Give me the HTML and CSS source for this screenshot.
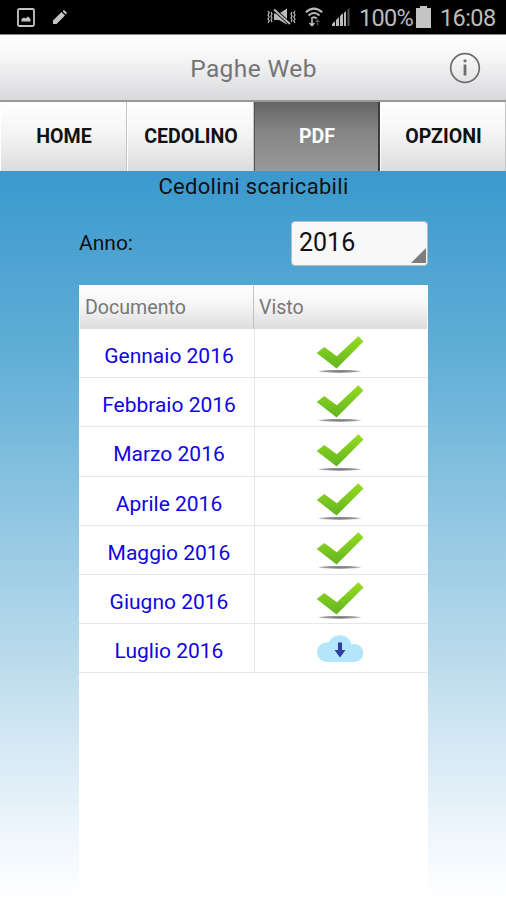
FILE: index.html
```html
<!DOCTYPE html>
<html lang="it">
<head>
    <meta charset="UTF-8">
    <meta name="viewport" content="width=device-width, initial-scale=1.0">
    <title>Paghe Web</title>
    <link rel="stylesheet" href="styles.css">
</head>
<body>

<!-- Shared icons -->
<svg class="icon-defs" width="0" height="0">
    <defs>
        <linearGradient id="check-fill" x1="0" y1="0" x2="0" y2="1">
            <stop offset="0" stop-color="#96dc1e"/>
            <stop offset="1" stop-color="#62b422"/>
        </linearGradient>
        <radialGradient id="check-shadow">
            <stop offset="0" stop-color="#777"/>
            <stop offset="0.7" stop-color="#999"/>
            <stop offset="1" stop-color="#ddd"/>
        </radialGradient>
        <symbol id="icon-check" viewBox="0 0 50 42">
            <ellipse cx="24.7" cy="37.3" rx="21.8" ry="1.6" fill="url(#check-shadow)"/>
            <path d="M1.700 19L9.300 13L21.800 22.300L43.300 2.200L48.500 7.500L21.600 34.500Z" fill="url(#check-fill)"/>
        </symbol>
    </defs>
</svg>

<div class="status-bar">
    <div class="status-left">
        <svg class="icon-picture" width="18" height="19" viewBox="0 0 18 19">
            <rect x="1" y="1" width="16" height="17" rx="1.5" fill="none" stroke="#c4c4c4" stroke-width="1.8"/>
            <path d="M4.5 13.5V11L7 9.5L8.5 10.5L11 8.5L13.5 11V13.5Z" fill="#c4c4c4"/>
        </svg>
        <svg class="icon-pencil" width="14" height="14" viewBox="0 0 14 14">
            <path d="M0 14V10.5L8.5 2L12 5.5L3.5 14ZM9.5 1.2L11 0L14 2.8L12.800 4.500Z" fill="#c4c4c4"/>
        </svg>
    </div>
    <div class="status-right">
        <svg width="29" height="18" viewBox="0 0 29 18" fill="none" stroke="#bbb" stroke-width="1.2">
            <path d="M1 3L2.2 5L1 7L2.2 9L1 11L2.2 13L1 15M4 4L5 6L4 8L5 10L4 12L5 14M25 4L24 6L25 8L24 10L25 12L24 14M28 3L26.8 5L28 7L26.8 9L28 11L26.8 13L28 15"/>
            <path d="M7 5.5H12L20 0.5V16.5L12 12H7Z" fill="#bbb" stroke="none"/>
            <path d="M7 1.5L23 16" stroke="#000" stroke-width="3.6"/>
            <path d="M7 1.5L23 16" stroke-width="1.8"/>
        </svg>
        <svg width="18" height="20" viewBox="0 0 18 20" fill="none" stroke="#bbb" stroke-width="2">
            <path d="M0.8 5.2Q9 -2 17.2 5.2M3.5 8.5Q9 3.5 14.5 8.5M6.2 11.5Q9 9 11.8 11.5"/>
            <path d="M7 12V18M4.5 16L7 18.5L9.5 16" stroke-width="1.6"/>
            <path d="M12.5 18.5V13M10.5 15L12.5 13L14.5 15" stroke="#555" stroke-width="1.3"/>
        </svg>
        <svg width="18" height="18" viewBox="0 0 18 18" fill="#bbb">
            <path d="M0 18V16L3 13V18ZM4 18V12L7 9V18ZM8 18V8L11 5V18ZM12 18V5L14 3V18Z"/>
            <path d="M15.5 18V1.5L17.5 0V18Z" fill="#555"/>
        </svg>
        <span class="battery-level">100%</span>
        <svg width="15" height="22" viewBox="0 0 15 22">
            <path d="M4 0H11V2H15V22H0V2H4Z" fill="#c4c4c4"/>
        </svg>
        <span class="clock">16:08</span>
    </div>
</div>

<header class="title-bar">
    <h1>Paghe Web</h1>
    <svg width="32" height="32" viewBox="0 0 32 32">
        <circle cx="16" cy="16" r="14.3" fill="none" stroke="#6e6e6e" stroke-width="1.7"/>
        <path d="M16 12.5V23.5M16 7.5V10.3" stroke="#6e6e6e" stroke-width="2.8"/>
    </svg>
</header>

<nav class="tabs">
    <a class="tab">HOME</a>
    <a class="tab">CEDOLINO</a>
    <a class="tab active">PDF</a>
    <a class="tab">OPZIONI</a>
</nav>

<main class="content">
    <h2>Cedolini scaricabili</h2>

    <div class="year-row">
        <span class="year-label">Anno:</span>
        <div class="year-select">
            <span>2016</span>
            <svg width="15" height="15" viewBox="0 0 15 15"><path d="M15 0V15H0Z" fill="#7d7d7d"/></svg>
        </div>
    </div>

    <!-- Documents -->
    <div class="documents">
        <div class="row head">
            <div class="cell">Documento</div>
            <div class="cell">Visto</div>
        </div>
        <div class="row">
            <div class="cell"><a>Gennaio 2016</a></div>
            <div class="cell"><svg class="check"><use href="#icon-check"/></svg></div>
        </div>
        <div class="row">
            <div class="cell"><a>Febbraio 2016</a></div>
            <div class="cell"><svg class="check"><use href="#icon-check"/></svg></div>
        </div>
        <div class="row">
            <div class="cell"><a>Marzo 2016</a></div>
            <div class="cell"><svg class="check"><use href="#icon-check"/></svg></div>
        </div>
        <div class="row">
            <div class="cell"><a>Aprile 2016</a></div>
            <div class="cell"><svg class="check"><use href="#icon-check"/></svg></div>
        </div>
        <div class="row">
            <div class="cell"><a>Maggio 2016</a></div>
            <div class="cell"><svg class="check"><use href="#icon-check"/></svg></div>
        </div>
        <div class="row">
            <div class="cell"><a>Giugno 2016</a></div>
            <div class="cell"><svg class="check"><use href="#icon-check"/></svg></div>
        </div>
        <div class="row">
            <div class="cell"><a>Luglio 2016</a></div>
            <div class="cell">
                <svg class="cloud" viewBox="0 0 46 30">
                    <path d="M10 29A9.5 9.5 0 0 1 9.5 9.5Q10.5 9 12 9A12 12 0 0 1 34.5 11.5A9 9 0 1 1 37 29Z" fill="#b3e5fc"/>
                    <path d="M21 9.5H25V17H28.5L23 24.5L17.5 17H21Z" fill="#303f9f"/>
                </svg>
            </div>
        </div>
    </div>
</main>

</body>
</html>
```

FILE: styles.css
```css
/* General Styles */
* {
    box-sizing: border-box;
}

body {
    font-family: Roboto, 'Liberation Sans', sans-serif;
    margin: 0;
    height: 900px;
    display: flex;
    flex-direction: column;
    overflow: hidden;
    color: #111;
}

svg {
    display: block;
    flex: none;
}

.icon-defs {
    position: absolute;
}

/* Status Bar */
.status-bar {
    height: 34px;
    flex: none;
    padding: 0 10px 0 17px;
    display: flex;
    justify-content: space-between;
    align-items: center;
    background-color: #000;
    color: #bbb;
}

.status-left,
.status-right {
    display: flex;
    align-items: center;
}

.status-left {
    gap: 18px;
}

.status-right {
    gap: 9px;
}

.battery-level,
.clock {
    font-size: 23.5px;
    line-height: 34px;
    padding-top: 2px;
}

.battery-level {
    margin-right: -5px;
    width: 53px;
    letter-spacing: -0.7px;
}

.clock {
    width: 56px;
    letter-spacing: -0.6px;
}

/* Title Bar */
.title-bar {
    height: 68px;
    flex: none;
    padding: 0 25px 0 57px;
    display: flex;
    align-items: center;
    background: linear-gradient(#fff, #f6f6f7 35%, #d8d9db);
    border-top: 1px solid #888;
    border-bottom: 2px solid #999;
}

.title-bar h1 {
    flex: 1;
    margin: 0;
    padding: 1px 0 0 1px;
    text-align: center;
    font-size: 24.5px;
    font-weight: 400;
    letter-spacing: 0.4px;
    color: #757575;
}

/* Tabs */
.tabs {
    height: 69px;
    flex: none;
    display: grid;
    grid-template-columns: 127px 127px 126px 126px;
}

.tab {
    display: flex;
    justify-content: center;
    align-items: center;
    padding: 0 0 1px 1px;
    font-size: 19.6px;
    font-weight: 700;
    color: #111;
    background: linear-gradient(#fff, #f5f5f5 45%, #dcdcdd);
    border-right: 1px solid #c4c4c4;
    border-left: 1px solid #fff;
}

.tab.active {
    color: #fff;
    background: linear-gradient(#646464, #848484 40%, #999);
    border-left: 1px solid #555;
    border-right: 2px solid #3c3c3c;
}

/* Content */
.content {
    flex: 1;
    padding: 0 78px 0 79px;
    display: flex;
    flex-direction: column;
    background: linear-gradient(#3b99ce, #62afd7 26%, #b6d9eb 65%, #eff6fc 91%, #fff);
}

.content h2 {
    margin: 0;
    height: 32px;
    line-height: 32px;
    text-align: center;
    font-size: 22px;
    font-weight: 400;
    letter-spacing: 0.3px;
}

.year-row {
    height: 46px;
    margin-top: 17px;
    display: flex;
    justify-content: space-between;
    align-items: center;
}

.year-label {
    font-size: 21px;
}

.year-select {
    width: 137px;
    height: 45px;
    padding: 0 1px 2px 7px;
    display: flex;
    justify-content: space-between;
    align-items: flex-end;
    font-size: 25px;
    line-height: 41px;
    background-color: #f8f8f8;
    border: 1px solid #b4bdc3;
    border-radius: 4px;
}

/* Documents */
.documents {
    flex: 1;
    margin-top: 19px;
    background-color: #fff;
}

.row {
    height: 49.2px;
    display: grid;
    grid-template-columns: 176px 1fr;
    border-bottom: 1px solid #e4e8ea;
}

.cell {
    display: flex;
    justify-content: center;
    align-items: center;
    font-size: 21px;
}

.cell a {
    padding: 6px 0 0 5px;
    color: #1005e0;
}

.cell:first-child {
    border-right: 1px solid #e4e8ea;
}

.row.head {
    height: 44px;
    grid-template-columns: 174px 1fr;
    background: linear-gradient(#fff, #f5f5f5 45%, #dddddf);
    border: 1px solid #fff;
    border-bottom: none;
}

.row.head .cell {
    justify-content: flex-start;
    padding-left: 5px;
    font-size: 19.6px;
    color: #777;
}

.row.head .cell:first-child {
    border-right-color: #c0c0c0;
}

.check {
    width: 50px;
    height: 42px;
    margin: 3px 3px 0 0;
}

.cloud {
    width: 46px;
    height: 30px;
    margin-right: 3px;
}
```
